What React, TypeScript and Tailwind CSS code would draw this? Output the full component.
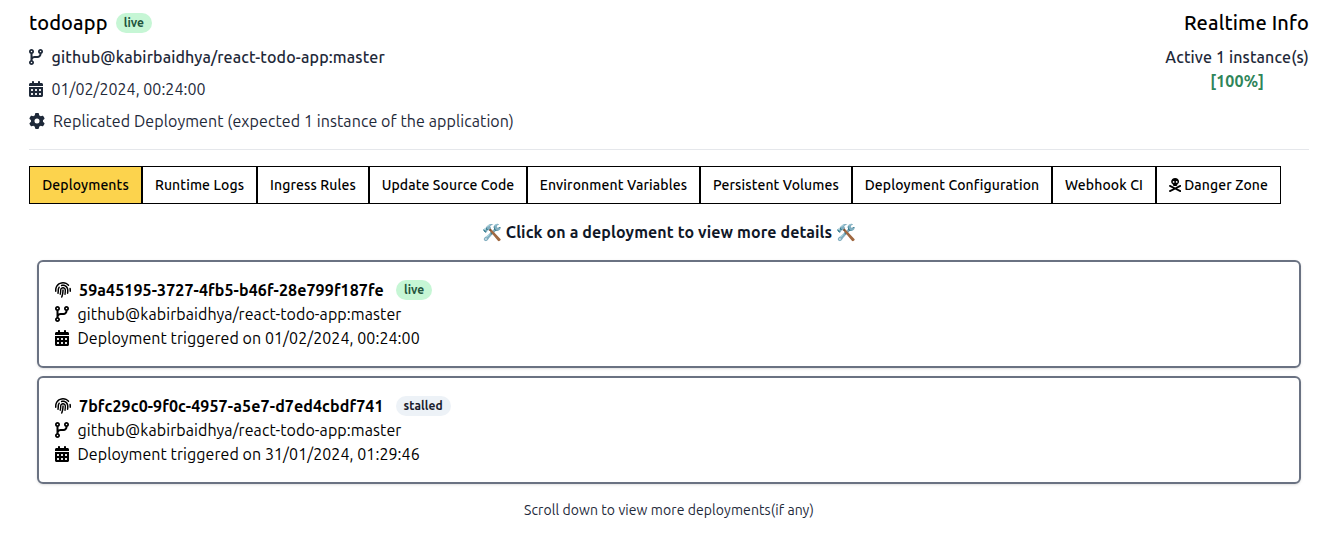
import type { ReactNode } from "react";
import {
  FaCalendarDays,
  FaCodeBranch,
  FaFingerprint,
  FaGear,
  FaSkullCrossbones,
} from "react-icons/fa6";

const tabs: { label: string; width: string }[] = [
  { label: "Deployments", width: "w-[113px]" },
  { label: "Runtime Logs", width: "w-[115px]" },
  { label: "Ingress Rules", width: "w-[112px]" },
  { label: "Update Source Code", width: "w-[158px]" },
  { label: "Environment Variables", width: "w-[173px]" },
  { label: "Persistent Volumes", width: "w-[152px]" },
  { label: "Deployment Configuration", width: "w-[200px]" },
  { label: "Webhook CI", width: "w-[104px]" },
  { label: "Danger Zone", width: "w-[125px]" },
];

const deployments = [
  { id: "59a45195-3727-4fb5-b46f-28e799f187fe", status: "live", date: "01/02/2024, 00:24:00" },
  { id: "7bfc29c0-9f0c-4957-a5e7-d7ed4cbdf741", status: "stalled", date: "31/01/2024, 01:29:46" },
];

const repo = "github@kabirbaidhya/react-todo-app:master";

function Badge({ status }: { status: string }) {
  const color = status === "live" ? "bg-[#c6f6d5] text-[#22543d]" : "bg-[#edf2f7] text-[#1a202c]";
  return (
    <span className={`flex h-5 items-center rounded-full px-2 text-xs font-semibold tracking-[0.1px] ${color}`}>
      {status}
    </span>
  );
}

function Row({ children, className = "" }: { children: ReactNode; className?: string }) {
  return <div className={`flex h-6 items-center whitespace-nowrap ${className}`}>{children}</div>;
}

export default function App() {
  return (
    <main className="h-[543px] overflow-hidden bg-white pt-[9px] pr-[33px] pl-[29px] font-[Ubuntu,'Noto_Sans',sans-serif] text-base text-black">
      <header className="flex h-[141px] justify-between border-b border-gray-200">
        <div className="flex flex-col gap-2 text-gray-800">
          <div className="flex h-7 items-center gap-2">
            <h1 className="text-xl font-medium tracking-[0.13px] text-black">todoapp</h1>
            <Badge status="live" />
          </div>
          <Row className="gap-[8.5px] font-medium">
            <FaCodeBranch className="h-4 w-3.5" />
            <span className="tracking-[0.14px]">{repo}</span>
          </Row>
          <Row className="gap-[8.5px]">
            <FaCalendarDays className="h-4 w-3.5" />
            <span className="tracking-[0.02px]">01/02/2024, 00:24:00</span>
          </Row>
          <Row className="gap-2">
            <FaGear className="size-4" />
            <span className="tracking-[0.09px]">Replicated Deployment (expected 1 instance of the application)</span>
          </Row>
        </div>
        <div className="flex flex-col items-end whitespace-nowrap">
          <h2 className="text-xl leading-7 font-medium tracking-[0.15px]">Realtime Info</h2>
          <div className="mt-2 text-center font-medium tracking-[0.14px] text-gray-800">
            <p>Active 1 instance(s)</p>
            <p className="font-bold text-[#2f855a]">[100%]</p>
          </div>
        </div>
      </header>

      <nav className="mt-4 flex h-[38px]">
        {tabs.map((tab, i) => (
          <button
            key={tab.label}
            className={`flex shrink-0 items-center justify-center gap-[3px] border border-black text-sm font-medium tracking-[0.12px] whitespace-nowrap ${tab.width} ${i === 0 ? "bg-[#fcd34d]" : "bg-white"}`}
          >
            {tab.label === "Danger Zone" && <FaSkullCrossbones className="h-3.5 w-[12.25px]" />}
            <span>{tab.label}</span>
          </button>
        ))}
      </nav>

      <p className="mt-4 text-center font-semibold tracking-[0.1px] text-gray-900">
        🛠️ Click on a deployment to view more details 🛠️
      </p>

      <section className="mx-2 mt-4 flex flex-col gap-2">
        {deployments.map((d) => (
          <article key={d.id} className="h-[108px] rounded-md border-2 border-gray-500 p-4 shadow-sm">
            <Row>
              <FaFingerprint className="size-4" />
              <span className="ml-2 font-bold tracking-[0.11px]">{d.id}</span>
              <span className="ml-3">
                <Badge status={d.status} />
              </span>
            </Row>
            <Row className="gap-[8.5px]">
              <FaCodeBranch className="h-4 w-3.5" />
              <span className="tracking-[0.09px]">{repo}</span>
            </Row>
            <Row className="gap-[8.5px]">
              <FaCalendarDays className="h-4 w-3.5" />
              <span className="tracking-[0.06px]">Deployment triggered on {d.date}</span>
            </Row>
          </article>
        ))}
      </section>

      <p className="mt-4 text-center text-sm tracking-[0.08px] text-gray-800">
        Scroll down to view more deployments(if any)
      </p>
    </main>
  );
}
